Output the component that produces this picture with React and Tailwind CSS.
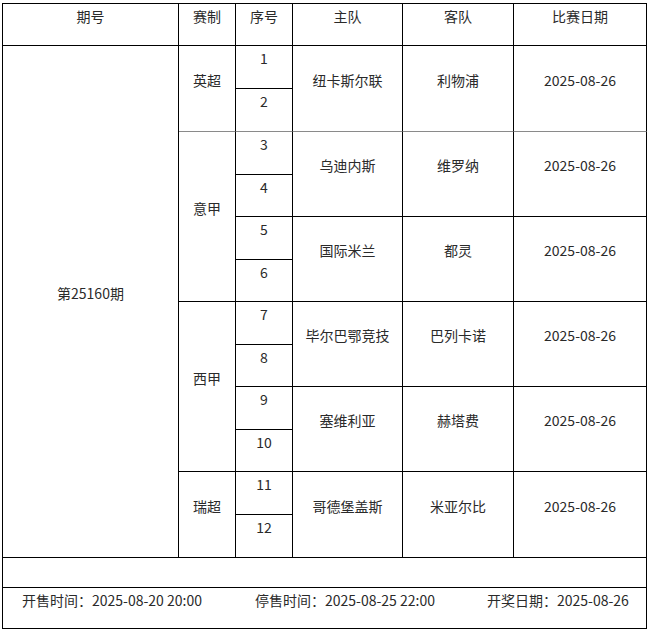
const groups = [
  {
    league: "英超",
    span: "row-span-2",
    matches: [{ no: [1, 2], home: "纽卡斯尔联", away: "利物浦", date: "2025-08-26" }],
  },
  {
    league: "意甲",
    span: "row-span-4",
    matches: [
      { no: [3, 4], home: "乌迪内斯", away: "维罗纳", date: "2025-08-26" },
      { no: [5, 6], home: "国际米兰", away: "都灵", date: "2025-08-26" },
    ],
  },
  {
    league: "西甲",
    span: "row-span-4",
    matches: [
      { no: [7, 8], home: "毕尔巴鄂竞技", away: "巴列卡诺", date: "2025-08-26" },
      { no: [9, 10], home: "塞维利亚", away: "赫塔费", date: "2025-08-26" },
    ],
  },
  {
    league: "瑞超",
    span: "row-span-2",
    matches: [{ no: [11, 12], home: "哥德堡盖斯", away: "米亚尔比", date: "2025-08-26" }],
  },
];

function Cell({ children, className = "", gray }) {
  return (
    <div
      className={`flex items-center justify-center pb-[18px] border-r border-b border-black ${
        gray ? "border-b-[#8a8a8a]" : ""
      } ${className}`}
    >
      {children}
    </div>
  );
}

export default function App() {
  const headers = ["期号", "赛制", "序号", "主队", "客队", "比赛日期"];

  return (
    <div
      className="min-h-[632px] bg-white pt-[3px] pl-[2px] text-[14px] text-[#2a2a2a]"
      style={{ fontFamily: '"Noto Sans CJK SC", "Noto Sans", sans-serif' }}
    >
      <div className="grid w-[645px] grid-cols-[176px_57px_57px_110px_111px_133px] grid-rows-[42px_43px_43px_43px_42px_43px_42px_43px_42px_43px_42px_43px_43px_30px_41px] border-l border-t border-black leading-none">
        {headers.map((h) => (
          <Cell key={h}>{h}</Cell>
        ))}

        <Cell className="col-start-1 row-span-12">第25160期</Cell>

        {groups.map((g, gi) => {
          const gray = gi === 0;
          return [
            <Cell key={g.league} className={`col-start-2 ${g.span}`} gray={gray}>
              {g.league}
            </Cell>,
            ...g.matches.flatMap((m) => [
              <Cell key={m.no[0]} className="col-start-3">
                {m.no[0]}
              </Cell>,
              <Cell key={m.home} className="col-start-4 row-span-2" gray={gray}>
                {m.home}
              </Cell>,
              <Cell key={m.away} className="col-start-5 row-span-2" gray={gray}>
                {m.away}
              </Cell>,
              <Cell key={m.home + "d"} className="col-start-6 row-span-2" gray={gray}>
                {m.date}
              </Cell>,
              <Cell key={m.no[1]} className="col-start-3" gray={gray}>
                {m.no[1]}
              </Cell>,
            ]),
          ];
        })}

        <div className="col-span-6 border-r border-b border-black" />

        <div className="col-span-6 flex items-center pl-[19px] pb-[16px] border-r border-b border-black">
          <span className="w-[233px]">开售时间：2025-08-20 20:00</span>
          <span className="w-[232px]">停售时间：2025-08-25 22:00</span>
          <span>开奖日期：2025-08-26</span>
        </div>
      </div>
    </div>
  );
}
